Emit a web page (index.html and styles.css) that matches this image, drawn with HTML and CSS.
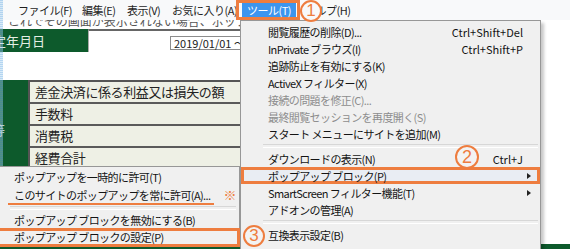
FILE: index.html
```html
<!DOCTYPE html>
<html lang="ja">
<head>
<meta charset="utf-8">
<title>ツール メニュー</title>
<link rel="stylesheet" href="styles.css">
</head>
<body>
<div class="screen">
  <div class="menubar">
    <span class="mb-item">ファイル(F)</span>
    <span class="mb-item">編集(E)</span>
    <span class="mb-item">表示(V)</span>
    <span class="mb-item">お気に入り(A)</span>
    <span class="mb-item mb-active"><span class="mb-hl">ツール(T)</span></span>
    <span class="mb-item mb-help">ヘルプ(H)</span>
  </div>

  <div class="page">
    <div class="note"><span>これでその画面が表示されない場合、ポップアップブロックの設定を確認してください。</span></div>
    <div class="date-row">
      <div class="date-label">約定年月日</div>
      <div class="date-cell"><span class="date-input">2019/01/01 ～ 2019/12/31</span></div>
    </div>
    <div class="pl-table">
      <div class="pl-side"><span>費等</span></div>
      <div class="pl-rows">
        <div class="pl-row">差金決済に係る利益又は損失の額</div>
        <div class="pl-row">手数料</div>
        <div class="pl-row">消費税</div>
        <div class="pl-row">経費合計</div>
      </div>
    </div>
    <div class="green-bar"></div>
  </div>

  <div class="edge"></div>

  <div class="tools-menu">
    <div class="mi"><span class="label">閲覧履歴の削除(D)...</span><span class="key">Ctrl+Shift+Del</span><span class="arrow-col"></span></div>
    <div class="mi"><span class="label">InPrivate ブラウズ(I)</span><span class="key">Ctrl+Shift+P</span><span class="arrow-col"></span></div>
    <div class="mi"><span class="label">追跡防止を有効にする(K)</span><span class="arrow-col"></span></div>
    <div class="mi"><span class="label">ActiveX フィルター(X)</span><span class="arrow-col"></span></div>
    <div class="mi disabled"><span class="label">接続の問題を修正(C)...</span><span class="arrow-col"></span></div>
    <div class="mi disabled"><span class="label">最終閲覧セッションを再度開く(S)</span><span class="arrow-col"></span></div>
    <div class="mi"><span class="label">スタート メニューにサイトを追加(M)</span><span class="arrow-col"></span></div>
    <div class="sep"></div>
    <div class="mi"><span class="label">ダウンロードの表示(N)</span><span class="key">Ctrl+J</span><span class="arrow-col"></span></div>
    <div class="mi boxed"><span class="label">ポップアップ ブロック(P)</span><span class="arrow-col"><i class="tri"></i></span></div>
    <div class="mi"><span class="label">SmartScreen フィルター機能(T)</span><span class="arrow-col"><i class="tri"></i></span></div>
    <div class="mi"><span class="label">アドオンの管理(A)</span><span class="arrow-col"></span></div>
    <div class="sep"></div>
    <div class="mi"><span class="label">互換表示設定(B)</span><span class="arrow-col"></span></div>
  </div>

  <div class="sub-menu">
    <div class="si">ポップアップを一時的に許可(T)</div>
    <div class="si"><span class="marked">このサイトのポップアップを常に許可(A)...</span><span class="kome">※</span></div>
    <div class="sub-sep"></div>
    <div class="si">ポップアップ ブロックを無効にする(B)</div>
    <div class="si boxed-sub">ポップアップ ブロックの設定(P)</div>
  </div>

  <div class="callout c1">1</div>
  <div class="callout c2">2</div>
  <div class="callout c3">3</div>
</div>
</body>
</html>
```

FILE: styles.css
```css
* {
  box-sizing: border-box;
  margin: 0;
  padding: 0;
}

html, body {
  width: 570px;
  height: 249px;
  overflow: hidden;
  background: #ffffff;
}

body {
  font-family: "Noto Sans CJK JP", "Noto Sans", sans-serif;
  font-size: 11px;
  color: #1e1e1e;
}

.screen {
  position: relative;
  width: 570px;
  height: 249px;
  overflow: hidden;
}

/* ---------- menu bar ---------- */
.menubar {
  display: grid;
  grid-template-columns: 64px 45px 45px 69px 64px auto;
  align-items: center;
  height: 20px;
  padding-left: 13px;
  background: #f8f9fa;
}

.mb-item {
  padding-left: 5px;
  line-height: 20px;
  letter-spacing: -0.5px;
  white-space: nowrap;
  color: #1e1e1e;
}

.mb-active {
  height: 20px;
  padding: 0 1px 0 3px;
  border: 3px solid #ee7d3f;
  display: flex;
  align-items: center;
}

.mb-hl {
  display: block;
  width: 100%;
  height: 14px;
  line-height: 14px;
  padding-left: 5px;
  background: #3d95ee;
  color: #ffffff;
}

/* ---------- page behind ---------- */
.note {
  height: 9px;
  overflow: hidden;
  padding-left: 8px;
  color: #555;
  font-size: 12px;
  white-space: nowrap;
}

.note span {
  display: block;
  line-height: 12px;
  margin-top: -5px;
}

.date-row {
  display: flex;
  height: 23px;
  width: 520px;
}

.date-label {
  width: 88px;
  background: #0d5a2c;
  color: #e4eee4;
  font-size: 13px;
  line-height: 23px;
  text-indent: -20px;
  overflow: hidden;
  white-space: nowrap;
}

.date-cell {
  flex: 1;
  border-top: 2px solid #666;
  border-left: 1px solid #aaa;
  padding: 4px 0 0 81px;
}

.date-input {
  display: inline-block;
  height: 14px;
  line-height: 12px;
  padding: 0 3px;
  border: 1px solid #8c8c8c;
  background: #fff;
  font-size: 11px;
  color: #222;
  white-space: nowrap;
}

.pl-table {
  display: flex;
  width: 520px;
  margin-top: 28px;
}

.pl-side {
  width: 28px;
  background: #0d5a2c;
  color: #dfe9df;
  font-size: 13px;
  display: flex;
  align-items: center;
  overflow: hidden;
  white-space: nowrap;
}

.pl-side span {
  margin-left: -21px;
  margin-top: 8px;
}

.pl-rows {
  flex: 1;
  border-left: 2px solid #555;
  border-top: 2px solid #555;
}

.pl-row {
  height: 22px;
  line-height: 20px;
  border-bottom: 2px solid #5a5a5a;
  background: #eef0e5;
  padding-left: 5px;
  font-size: 13px;
  letter-spacing: -0.4px;
  color: #222;
}

.green-bar {
  height: 12px;
  margin-top: 74px;
  background: #0d5a2c;
}

.edge {
  position: absolute;
  left: 0;
  top: 0;
  width: 3px;
  height: 166px;
  background: repeating-linear-gradient(to bottom, rgba(120, 180, 230, 0.55) 0 1px, rgba(170, 210, 240, 0.45) 1px 2px);
}

/* ---------- tools dropdown ---------- */
.tools-menu {
  position: absolute;
  left: 240px;
  top: 20px;
  width: 301px;
  height: 240px;
  padding-top: 2px;
  background: #f0f0f0;
  border: 1px solid #979797;
  box-shadow: 3px 3px 3px rgba(0, 0, 0, 0.22);
}

.mi {
  display: flex;
  align-items: center;
  height: 17px;
  padding: 0 4px 0 27px;
  white-space: nowrap;
  color: #141414;
}

.mi .label {
  flex: 1;
  letter-spacing: -0.6px;
}

.mi .key {
  letter-spacing: 0;
}

.arrow-col {
  width: 13px;
  display: flex;
  align-items: center;
  padding-left: 4px;
}

.tri {
  display: block;
  width: 0;
  height: 0;
  border-left: 4px solid #222;
  border-top: 3px solid transparent;
  border-bottom: 3px solid transparent;
}

.mi.disabled {
  color: #8d8d8d;
}

.mi.boxed {
  background: #e9edf3;
  box-shadow: inset 0 0 0 3px #ee7d3f;
}

.sep {
  height: 8px;
  display: flex;
  align-items: center;
  padding: 0 2px 0 22px;
}

.sep::before {
  content: "";
  flex: 1;
  height: 2px;
  border-top: 1px solid #d7d7d7;
  border-bottom: 1px solid #ffffff;
}

/* ---------- popup submenu ---------- */
.sub-menu {
  position: absolute;
  left: -3px;
  top: 166px;
  width: 243px;
  height: 81px;
  padding-top: 2px;
  background: #f0f0f0;
  border: 1px solid #979797;
}

.si {
  height: 17px;
  line-height: 17px;
  padding-left: 16px;
  white-space: nowrap;
  letter-spacing: -0.6px;
  color: #141414;
}

.marked {
  border-bottom: 2px solid #ee7d3f;
  padding: 0 3px 0 6px;
  margin-left: -6px;
}

.kome {
  margin-left: 10px;
  color: #ee7d3f;
  font-size: 13px;
}

.sub-sep {
  height: 9px;
  display: flex;
  align-items: center;
  padding: 0 3px 0 12px;
}

.sub-sep::before {
  content: "";
  flex: 1;
  height: 2px;
  border-top: 1px solid #d7d7d7;
  border-bottom: 1px solid #ffffff;
}

.si.boxed-sub {
  box-shadow: 0 0 0 1px #ee7d3f, inset 0 0 0 2px #ee7d3f;
}

/* ---------- numbered callouts ---------- */
.callout {
  position: absolute;
  width: 22px;
  height: 22px;
  border: 2px solid #ee7d3f;
  border-radius: 50%;
  background: #f3f3f3;
  color: #ee7d3f;
  font-family: "Liberation Sans", sans-serif;
  font-size: 17px;
  line-height: 18px;
  text-align: center;
}

.c1 {
  left: 300px;
  top: 0;
  background: #f8f9fa;
}

.c2 {
  left: 455px;
  top: 145px;
  width: 24px;
  height: 24px;
  line-height: 20px;
  font-size: 18px;
}

.c3 {
  left: 243px;
  top: 225px;
}
```
